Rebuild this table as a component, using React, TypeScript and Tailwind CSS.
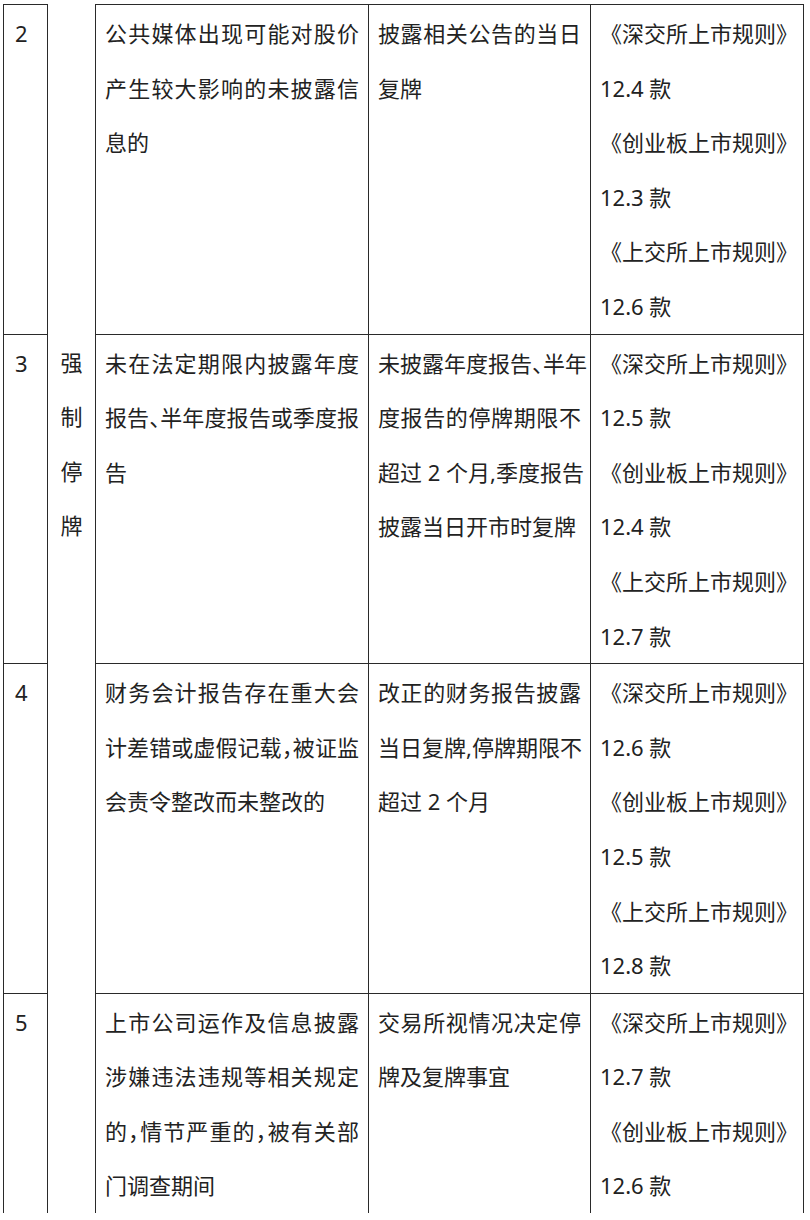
import React from 'react';

type Row = {
  num: string;
  cond: string[];
  resume: string[];
  rules: [string, string][];
};

const rows: Row[] = [
  {
    num: '2',
    cond: ['公共媒体出现可能对股价', '产生较大影响的未披露信', '息的'],
    resume: ['披露相关公告的当日', '复牌'],
    rules: [
      ['《深交所上市规则》', '12.4 款'],
      ['《创业板上市规则》', '12.3 款'],
      ['《上交所上市规则》', '12.6 款'],
    ],
  },
  {
    num: '3',
    cond: ['未在法定期限内披露年度', '报告、半年度报告或季度报', '告'],
    resume: ['未披露年度报告、半年', '度报告的停牌期限不', '超过 2 个月,季度报告', '披露当日开市时复牌'],
    rules: [
      ['《深交所上市规则》', '12.5 款'],
      ['《创业板上市规则》', '12.4 款'],
      ['《上交所上市规则》', '12.7 款'],
    ],
  },
  {
    num: '4',
    cond: ['财务会计报告存在重大会', '计差错或虚假记载，被证监', '会责令整改而未整改的'],
    resume: ['改正的财务报告披露', '当日复牌,停牌期限不', '超过 2 个月'],
    rules: [
      ['《深交所上市规则》', '12.6 款'],
      ['《创业板上市规则》', '12.5 款'],
      ['《上交所上市规则》', '12.8 款'],
    ],
  },
  {
    num: '5',
    cond: ['上市公司运作及信息披露', '涉嫌违法违规等相关规定', '的，情节严重的，被有关部', '门调查期间'],
    resume: ['交易所视情况决定停', '牌及复牌事宜'],
    rules: [
      ['《深交所上市规则》', '12.7 款'],
      ['《创业板上市规则》', '12.6 款'],
    ],
  },
];

// half-width the ideographic comma / 、 so the lines fit like the source doc
const withHalt = (s: string) =>
  s.split(/([，、])/).map((part, i) =>
    part === '，' || part === '、' ? (
      <span key={i} className="[font-feature-settings:'halt']">
        {part}
      </span>
    ) : (
      <React.Fragment key={i}>{part}</React.Fragment>
    )
  );

const Para = ({ lines }: { lines: string[] }) => (
  <div>
    {lines.map((l, i) => (
      <div
        key={i}
        className={
          i < lines.length - 1
            ? 'whitespace-nowrap text-justify [text-align-last:justify]'
            : 'whitespace-nowrap'
        }
      >
        {withHalt(l)}
      </div>
    ))}
  </div>
);

const cell = 'align-top border-[1.5px] border-[#2a2a2a] pt-[1px]';
const textCell = 'pl-[9px] pr-[9px]';

export default function App() {
  return (
    <div
      className="w-[810px] h-[1220px] bg-white overflow-hidden text-[#222] text-[22px] leading-[54.6px]"
      style={{ fontFamily: '"Noto Sans", "Noto Sans CJK SC", sans-serif' }}
    >
      <table className="ml-[3px] mt-[4px] w-[800px] table-fixed border-collapse">
        <colgroup>
          <col className="w-[44px]" />
          <col className="w-[48px]" />
          <col className="w-[273px]" />
          <col className="w-[222px]" />
          <col className="w-[213px]" />
        </colgroup>
        <tbody>
          {rows.map((r, ri) => {
            const last = ri === rows.length - 1;
            const b = last ? 'border-b-0' : '';
            return (
              <tr key={r.num}>
                <td className={`${cell} pl-[11px] ${b}`}>{r.num}</td>
                {ri === 0 && (
                  <td rowSpan={4} className={`${cell} border-t-0 border-b-0 text-center pt-[330px]`}>
                    {['强', '制', '停', '牌'].map((c) => (
                      <div key={c}>{c}</div>
                    ))}
                  </td>
                )}
                <td className={`${cell} ${textCell} ${b}`}>
                  <Para lines={r.cond} />
                </td>
                <td className={`${cell} ${textCell} ${b}`}>
                  <Para lines={r.resume} />
                </td>
                <td className={`${cell} ${textCell} ${b}`}>
                  {r.rules.map(([name, art]) => (
                    <Para key={name} lines={[name, art]} />
                  ))}
                </td>
              </tr>
            );
          })}
        </tbody>
      </table>
    </div>
  );
}
